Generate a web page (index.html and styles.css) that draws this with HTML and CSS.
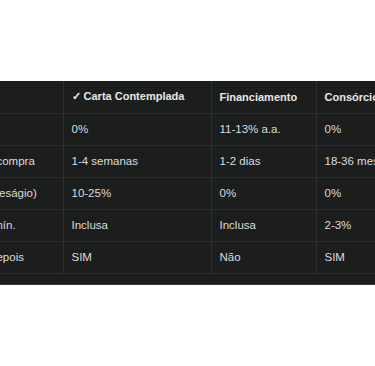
FILE: index.html
```html
<!DOCTYPE html>
<html lang="pt">
<head>
<meta charset="utf-8">
<link rel="stylesheet" href="styles.css">
</head>
<body>
<div class="scroller">
  <table class="cmp">
    <thead>
      <tr>
        <th class="c1">Critério</th>
        <th class="c2">✓ Carta Contemplada</th>
        <th class="c3">Financiamento</th>
        <th class="c4">Consórcio</th>
      </tr>
    </thead>
    <tbody>
      <tr><td>Juros</td><td>0%</td><td>11-13% a.a.</td><td>0%</td></tr>
      <tr><td>Prazo para compra</td><td>1-4 semanas</td><td>1-2 dias</td><td>18-36 meses</td></tr>
      <tr><td>Desconto (deságio)</td><td>10-25%</td><td>0%</td><td>0%</td></tr>
      <tr><td>Taxa adm. mín.</td><td>Inclusa</td><td>Inclusa</td><td>2-3%</td></tr>
      <tr><td>Revender depois</td><td>SIM</td><td>Não</td><td>SIM</td></tr>
    </tbody>
  </table>
</div>
</body>
</html>
```
FILE: styles.css
```css
html, body {
  margin: 0;
  padding: 0;
  background: #ffffff;
}
body {
  padding-top: 81px;
  font-family: "Liberation Sans", Arial, sans-serif;
}
.scroller {
  width: 375px;
  overflow: hidden;
  background: #1c1d1d;
  padding-bottom: 10px;
  border-bottom: 1px solid #3c3d3c;
}
.cmp {
  border-collapse: collapse;
  margin-left: -71px;
  table-layout: fixed;
  width: 540px;
}
.cmp th, .cmp td {
  height: 32px;
  padding: 0 7px 0 8px;
  text-align: left;
  font-size: 11.5px;
  white-space: nowrap;
  color: #dcdcdc;
  border-right: 1px solid #2c2d2d;
  border-bottom: 1px solid #2c2d2d;
  box-sizing: border-box;
}
.cmp th {
  font-size: 11px;
  font-weight: bold;
  color: #e8e8e8;
}
.c1 { width: 134px; }
.c2 { width: 148px; }
.c3 { width: 105px; }
.c4 { width: 153px; }
```
